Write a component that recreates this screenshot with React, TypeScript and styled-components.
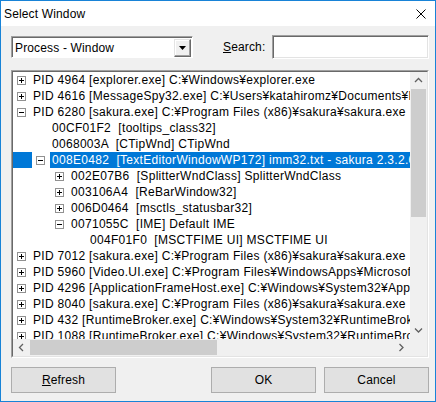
import React from 'react'
import styled, { createGlobalStyle, css } from 'styled-components'

const GlobalStyle=createGlobalStyle`
  html, body{
    margin: 0;
    padding: 0;
    background: #fff;
  }
  body{
    font-family: "Liberation Sans", Arial, sans-serif;
    font-size: 12px;
    letter-spacing: 0.15px;
    color: #000;
  }
  *{
    box-sizing: border-box;
  }
`

// classic 3D client edge used by the combo, the edit box and the tree
const sunkenEdge=css`
  border: 1px solid;
  border-color: #a0a0a0 #fff #fff #a0a0a0;
`
const sunkenInner=css`
  border: 1px solid;
  border-color: #696969 #e3e3e3 #e3e3e3 #696969;
`

const Window=styled.div`
  width: 436px;
  height: 402px;
  border: 1px solid #1883d7;
  background: #f0f0f0;
  display: flex;
  flex-direction: column;
`

const TitleBar=styled.div`
  height: 25px;
  background: #fff;
  display: flex;
  align-items: center;
  justify-content: space-between;
  padding: 0 9px 0 3px;
`

const Title=styled.span`
  line-height: 16px;
  padding-top: 1px;
`

const Body=styled.div`
  flex: 1;
  display: flex;
  flex-direction: column;
  padding: 9px 6px 8px 10px;
`

const TopRow=styled.div`
  display: flex;
  align-items: center;
  height: 24px;
`

const Combo=styled.div`
  ${sunkenEdge}
  width: 182px;
  height: 22px;
  background: #fff;
  display: flex;
`
const ComboInner=styled.div`
  flex: 1;
  display: flex;
  align-items: center;
  border-top: 1px solid #696969;
  border-left: 1px solid #696969;
`
const ComboText=styled.span`
  flex: 1;
  padding-left: 2px;
  line-height: 16px;
`
const DropButton=styled.div`
  width: 17px;
  height: 18px;
  margin-right: 1px;
  background: #f0f0f0;
  border: 1px solid;
  border-color: #e3e3e3 #696969 #696969 #e3e3e3;
  box-shadow: inset -1px -1px 0 #a0a0a0, inset 1px 1px 0 #fff;
  display: flex;
  align-items: center;
  justify-content: center;
`

const SearchLabel=styled.label`
  margin-left: 30px;
  line-height: 16px;
`
const SearchInput=styled.div`
  ${sunkenEdge}
  margin-left: auto;
  width: 157px;
  height: 24px;
  background: #fff;
  box-shadow: inset 1px 1px 0 #696969, inset -1px -1px 0 #e3e3e3;
`

const TreeFrame=styled.div`
  ${sunkenEdge}
  margin-top: 11px;
  height: 288px;
  display: flex;
`
const TreeInner=styled.div`
  ${sunkenInner}
  flex: 1;
  display: grid;
  grid-template-columns: 1fr 17px;
  grid-template-rows: 1fr 17px;
  min-width: 0;
`
const Viewport=styled.div`
  background: #fff;
  overflow: hidden;
  min-width: 0;
  letter-spacing: 0.3px;
`

const Row=styled.div<{$level: number, $selected?: boolean}>`
  display: flex;
  align-items: center;
  height: 16px;
  padding-left: ${p=>4+p.$level*19}px;
  white-space: pre;
  background: ${p=>p.$selected? '#0078d7' : 'transparent'};
  color: ${p=>p.$selected? '#fff' : '#000'};
`
const ExpanderSlot=styled.div<{$selected?: boolean}>`
  flex: 0 0 14px;
  height: 16px;
  display: flex;
  align-items: center;
  background: ${p=>p.$selected? '#fff' : 'transparent'};
  box-shadow: ${p=>p.$selected? '-4px 0 0 #fff' : 'none'};
`
const Label=styled.span`
  flex-shrink: 0;
  padding-left: 2px;
  line-height: 16px;
`

const VScroll=styled.div`
  background: #f0f0f0;
  display: flex;
  flex-direction: column;
`
const HScroll=styled.div`
  background: #f0f0f0;
  display: flex;
`
const Corner=styled.div`
  background: #f0f0f0;
`
const ArrowBox=styled.div`
  flex: 0 0 17px;
  height: 17px;
  width: 17px;
  display: flex;
  align-items: center;
  justify-content: center;
`
const Thumb=styled.div<{$vertical?: boolean}>`
  background: #cdcdcd;
  ${p=>p.$vertical
    ? css`height: 128px; margin: 0 1px;`
    : css`width: 187px; margin: 1px 0;`}
`
const Spacer=styled.div`
  flex: 1;
`

const ButtonRow=styled.div`
  margin-top: 9px;
  display: flex;
  justify-content: space-between;
`
const ButtonGroup=styled.div`
  display: flex;
  gap: 8px;
`
const Button=styled.button`
  width: 105px;
  height: 26px;
  background: #e1e1e1;
  border: 1px solid #adadad;
  font: inherit;
  letter-spacing: inherit;
  color: #000;
  padding: 0;
`

const Chevron=({dir}: {dir: 'up'|'down'|'left'|'right'})=>{
  const points={
    up: '1,5 4.5,1.5 8,5',
    down: '1,1.5 4.5,5 8,1.5',
    left: '5,1 1.5,4.5 5,8',
    right: '1.5,1 5,4.5 1.5,8',
  }[dir]
  const vertical=dir==='up'||dir==='down'
  return <svg width={vertical?9:7} height={vertical?7:9} viewBox={vertical?'0 0 9 7':'0 0 7 9'}>
    <polyline points={points} fill="none" stroke="#606060" strokeWidth="1.3"/>
  </svg>
}

const Expander=({open}: {open: boolean})=>
  <svg width="9" height="9" viewBox="0 0 9 9">
    <rect x="0.5" y="0.5" width="8" height="8" fill="#fff" stroke="#919191"/>
    <line x1="2" y1="4.5" x2="7" y2="4.5" stroke="#000"/>
    {!open && <line x1="4.5" y1="2" x2="4.5" y2="7" stroke="#000"/>}
  </svg>

interface Node{
  level: number,
  text: string,
  expander?: 'open'|'closed',
  selected?: boolean,
}

const nodes: Node[]=[
  {level: 0, expander: 'closed', text: 'PID 4964 [explorer.exe] C:¥Windows¥explorer.exe'},
  {level: 0, expander: 'closed', text: 'PID 4616 [MessageSpy32.exe] C:¥Users¥katahiromz¥Documents¥DEV¥MessageSpy32¥build¥MessageSpy32.exe'},
  {level: 0, expander: 'open', text: 'PID 6280 [sakura.exe] C:¥Program Files (x86)¥sakura¥sakura.exe'},
  {level: 1, text: '00CF01F2  [tooltips_class32]'},
  {level: 1, text: '0068003A  [CTipWnd] CTipWnd'},
  {level: 1, expander: 'open', selected: true, text: '008E0482  [TextEditorWindowWP172] imm32.txt - sakura 2.3.2.0'},
  {level: 2, expander: 'closed', text: '002E07B6  [SplitterWndClass] SplitterWndClass'},
  {level: 2, expander: 'closed', text: '003106A4  [ReBarWindow32]'},
  {level: 2, expander: 'closed', text: '006D0464  [msctls_statusbar32]'},
  {level: 2, expander: 'open', text: '0071055C  [IME] Default IME'},
  {level: 3, text: '004F01F0  [MSCTFIME UI] MSCTFIME UI'},
  {level: 0, expander: 'closed', text: 'PID 7012 [sakura.exe] C:¥Program Files (x86)¥sakura¥sakura.exe'},
  {level: 0, expander: 'closed', text: 'PID 5960 [Video.UI.exe] C:¥Program Files¥WindowsApps¥Microsoft.ZuneVideo_10.19071.19011.0_x64__8wekyb3d8bbwe¥Video.UI.exe'},
  {level: 0, expander: 'closed', text: 'PID 4296 [ApplicationFrameHost.exe] C:¥Windows¥System32¥ApplicationFrameHost.exe'},
  {level: 0, expander: 'closed', text: 'PID 8040 [sakura.exe] C:¥Program Files (x86)¥sakura¥sakura.exe'},
  {level: 0, expander: 'closed', text: 'PID 432 [RuntimeBroker.exe] C:¥Windows¥System32¥RuntimeBroker.exe'},
  {level: 0, expander: 'closed', text: 'PID 1088 [RuntimeBroker.exe] C:¥Windows¥System32¥RuntimeBroker.exe'},
]

const TreeRow=({node}: {node: Node})=>
  <Row $level={node.level} $selected={node.selected}>
    <ExpanderSlot $selected={node.selected}>
      {node.expander && <Expander open={node.expander==='open'}/>}
    </ExpanderSlot>
    <Label>{node.text}</Label>
  </Row>

function App() {
  return (
    <>
      <GlobalStyle/>
      <Window>
        <TitleBar>
          <Title>Select Window</Title>
          <svg width="10" height="10" viewBox="0 0 10 10">
            <path d="M0.5 0.5 L9.5 9.5 M9.5 0.5 L0.5 9.5" stroke="#000" strokeWidth="1"/>
          </svg>
        </TitleBar>
        <Body>
          <TopRow>
            <Combo>
              <ComboInner>
                <ComboText>Process - Window</ComboText>
                <DropButton>
                  <svg width="7" height="4" viewBox="0 0 7 4"><polygon points="0,0 7,0 3.5,4" fill="#000"/></svg>
                </DropButton>
              </ComboInner>
            </Combo>
            <SearchLabel><u>S</u>earch:</SearchLabel>
            <SearchInput/>
          </TopRow>
          <TreeFrame>
            <TreeInner>
              <Viewport>
                {nodes.map((node, index)=><TreeRow key={index} node={node}/>)}
              </Viewport>
              <VScroll>
                <ArrowBox><Chevron dir="up"/></ArrowBox>
                <Thumb $vertical/>
                <Spacer/>
                <ArrowBox><Chevron dir="down"/></ArrowBox>
              </VScroll>
              <HScroll>
                <ArrowBox><Chevron dir="left"/></ArrowBox>
                <Thumb/>
                <Spacer/>
                <ArrowBox><Chevron dir="right"/></ArrowBox>
              </HScroll>
              <Corner/>
            </TreeInner>
          </TreeFrame>
          <ButtonRow>
            <Button><u>R</u>efresh</Button>
            <ButtonGroup>
              <Button>OK</Button>
              <Button>Cancel</Button>
            </ButtonGroup>
          </ButtonRow>
        </Body>
      </Window>
    </>
  )
}

export default App
